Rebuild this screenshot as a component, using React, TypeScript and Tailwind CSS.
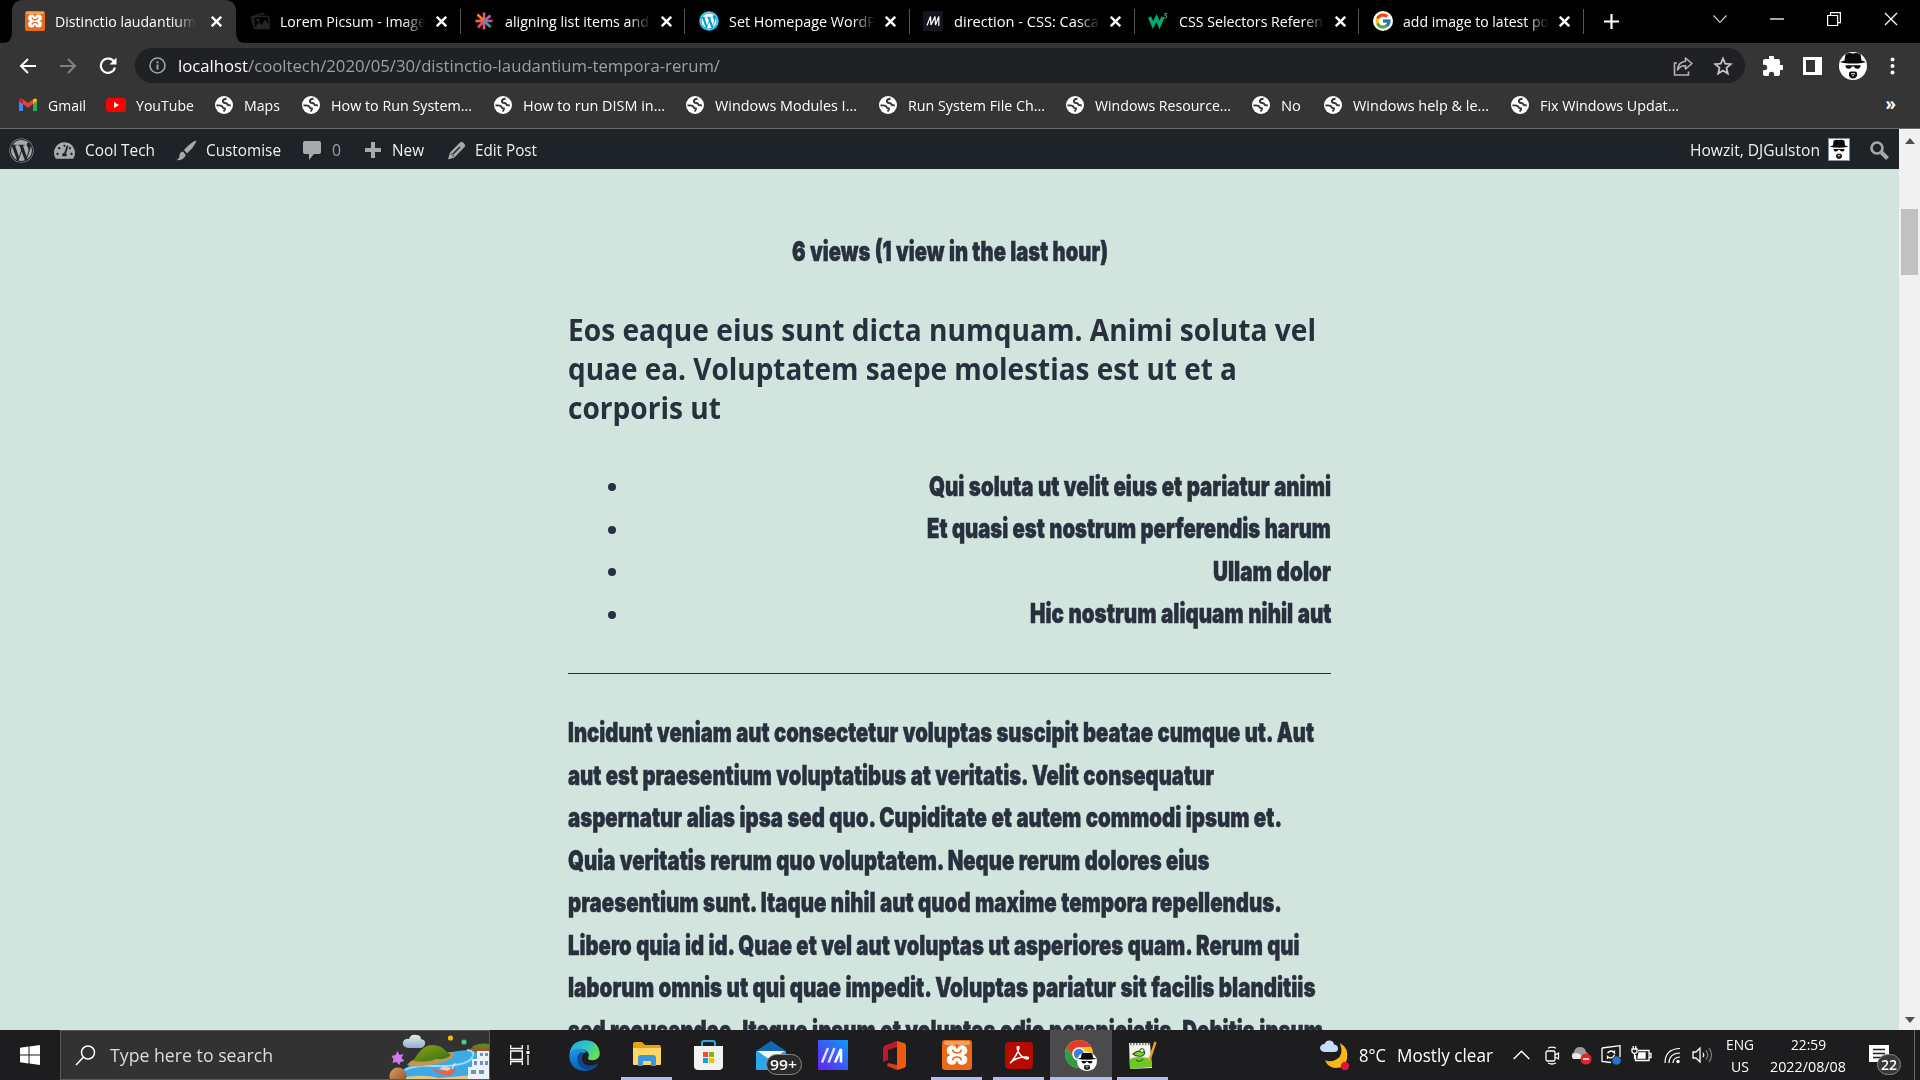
import React, { useLayoutEffect, useRef } from "react";
import { FaWordpress, FaTachometerAlt } from "react-icons/fa";
import { FcGoogle } from "react-icons/fc";

/* Single line of text squeezed or stretched to an exact width. */
function Fit({ w, className = "", children }: { w: number; className?: string; children: React.ReactNode }) {
  const ref = useRef<HTMLSpanElement>(null);
  useLayoutEffect(() => {
    const el = ref.current;
    if (el && el.offsetWidth) {
      el.style.transform = "none";
      el.style.transform = `scaleX(${w / el.getBoundingClientRect().width})`;
    }
  }, [w]);
  return (
    <span className={"block shrink-0 whitespace-nowrap " + className} style={{ width: w }}>
      <span ref={ref} className="inline-block origin-left">{children}</span>
    </span>
  );
}

const Cross = ({ s = 11, t = 2.2 }: { s?: number; t?: number }) => (
  <svg width={s} height={s} viewBox="0 0 10 10" stroke="#fff" strokeWidth={t} fill="none"><path d="M.7.7l8.600 8.600M9.300.7L.7 9.300" /></svg>
);

const Xampp = ({ s }: { s: number }) => (
  <svg width={s} height={s} viewBox="0 0 30 30">
    <rect width="30" height="30" rx="3" fill="#ec6a16" />
    <rect x="2" y="1" width="26" height="4" rx="2" fill="#f5a05c" />
    <g fill="#fff">
      <circle cx="10" cy="10.500" r="5.300" /><circle cx="20" cy="10.500" r="5.300" />
      <circle cx="10" cy="19.500" r="5.300" /><circle cx="20" cy="19.500" r="5.300" />
      <path d="M8 11h14v8H8z" />
    </g>
    <path d="M10.500 9.500q.5 3.500 4.500 3.500t4.500-3.500M10.500 20.500q.5-3.500 4.500-3.500t4.500 3.500" fill="none" stroke="#ec6a16" strokeWidth="1.700" />
    <path d="M4 15h3.500M22.500 15H26M15 4v4.500M15 21.500V26" stroke="#ec6a16" strokeWidth="1.800" />
  </svg>
);

const Picsum = () => (
  <svg width="20" height="20" viewBox="0 0 20 20" fill="none" stroke="#252525" strokeWidth="1.500">
    <path d="M3 14L1.500 6 13 2.500l1 2" /><rect x="4" y="5.500" width="15" height="12" rx="1.500" />
    <path d="M5 17l4-5 3 3 3-5 4 6v1.500z" fill="#252525" /><circle cx="8" cy="9" r="1" />
  </svg>
);

const Splat = () => (
  <svg width="20" height="20" viewBox="0 0 20 20" strokeWidth="2.600">
    <path d="M10 10V1.500" stroke="#e8536c" /><path d="M10 10L3.500 3.500" stroke="#f48024" /><path d="M10 10l6.500-5.500" stroke="#a86bc0" />
    <path d="M10 10H1.500" stroke="#ee6c3b" /><path d="M10 10h8.500" stroke="#d0507a" /><path d="M10 10l-6 6.500" stroke="#e8467c" />
    <path d="M10 10v8.500" stroke="#ed4f6a" /><path d="M10 10l6.500 6" stroke="#2ea8b5" />
  </svg>
);

const WpBlue = () => (
  <span className="flex size-5 items-center justify-center rounded-full bg-[#00a0d2]"><FaWordpress size={18} color="#fff" /></span>
);

const Mdn = () => (
  <svg width="20" height="20" viewBox="0 0 20 20"><rect width="20" height="20" fill="#15141f" /><path d="M4 14.500L7.500 5.500l.5 8.500L12 5.500l.5 8.500L15.800 5.500V15" stroke="#fff" strokeWidth="1.200" fill="none" /></svg>
);

const W3 = () => (
  <svg width="20" height="20" viewBox="0 0 20 20" fill="none" stroke="#04aa6d">
    <path d="M1.500 6l3.500 8 3.500-7 3 7 3.500-8" strokeWidth="3.300" /><path d="M16 2.500h2.500L17 4.500c3 0 1.500 3.500-1 2.300" strokeWidth="1.100" />
  </svg>
);

const GoogleFav = () => <span className="flex size-5 items-center justify-center rounded-full bg-white"><FcGoogle size={18} /></span>;

function Hat({ w, h, round }: { w: number; h: number; round?: boolean }) {
  return (
    <svg width={w} height={h} viewBox="0 0 28 28" preserveAspectRatio="none" className={round ? "rounded-full" : ""}>
      <rect width="28" height="28" fill="#fff" />
      <path d="M5.500 8.500L6.500 2Q10 .4 14 1.400 18 .4 21.500 2l1 6.500q2.500.6 4.500 1.500-5 1.600-13 1.600T1 10q2-1 4.500-1.500z" fill="#0a0a0a" />
      <path d="M6.500 13.200h15v1q-.5 2.600-3.200 2.600-2.600 0-3.300-2.400h-2q-.7 2.400-3.300 2.400-2.700 0-3.200-2.600z" fill="#0a0a0a" />
      <path d="M10 24v-2.500q0-2 2-2h4q2 0 2 2V24q-1.500 2.500-4 2.500T10 24z" fill="#0a0a0a" />
      <path d="M12 21.800h4M13.200 23.800h1.600" stroke="#fff" strokeWidth="1.100" />
    </svg>
  );
}

const tabs: { icon: React.ReactNode; text: string; w: number }[] = [
  { icon: <Picsum />, text: "Lorem Picsum - Image", w: 146 },
  { icon: <Splat />, text: "aligning list items and", w: 144 },
  { icon: <WpBlue />, text: "Set Homepage WordP", w: 147 },
  { icon: <Mdn />, text: "direction - CSS: Casca", w: 145 },
  { icon: <W3 />, text: "CSS Selectors Referen", w: 144 },
  { icon: <GoogleFav />, text: "add image to latest po", w: 146 },
];

function TabStrip() {
  return (
    <div className="flex h-[43px] bg-black pl-[11.6px] text-[15px]">
      <div className="relative flex w-[224.6px] items-center rounded-t-[10px] bg-[#353535] pb-px pl-[13.5px]">
        <svg className="absolute bottom-0 -left-[10px]" width="10" height="10"><path d="M10 0v10H0Q10 10 10 0z" fill="#353535" /></svg>
        <svg className="absolute -right-[10px] bottom-0" width="10" height="10"><path d="M0 0v10h10Q0 10 0 0z" fill="#353535" /></svg>
        <Xampp s={20} />
        <Fit w={141} className="ml-[10px] mask-r-from-85%">Distinctio laudantium</Fit>
        <span className="ml-[15px]"><Cross /></span>
      </div>
      {tabs.map((t) => (
        <div key={t.text} className="flex w-[224.6px] shrink-0 items-center pb-px pl-[13.5px]">
          <span className="w-5 shrink-0">{t.icon}</span>
          <span className="ml-[10.500px] w-[146px] overflow-hidden mask-r-from-85%"><Fit w={t.w}>{t.text}</Fit></span>
          <span className="ml-[10px]"><Cross /></span>
          <span className="mr-0 ml-auto h-[25px] w-px bg-[#555]" />
        </div>
      ))}
      <svg className="mt-[14px] ml-[20px]" width="15" height="15" stroke="#fff" strokeWidth="2.200"><path d="M7.500 0v15M0 7.500h15" /></svg>
      <div className="mr-[22px] ml-auto flex h-[37px] items-center gap-[43px]">
        <svg width="14" height="8" fill="none" stroke="#ddd" strokeWidth="1.100"><path d="M.5.5L7 7.300 13.500.5" /></svg>
        <svg width="14" height="2"><path d="M0 1h14" stroke="#fff" strokeWidth="1.300" /></svg>
        <svg width="14" height="14" fill="none" stroke="#fff" strokeWidth="1.200"><path d="M.6 3.500h10v10H.6zM3.500 3.300V.6h9.900v10h-2.600" /></svg>
        <Cross s={14} t={0.9} />
      </div>
    </div>
  );
}

function Toolbar() {
  return (
    <div className="flex h-[45px] items-center pl-[19px]">
      <svg width="18" height="16" fill="none" stroke="#fff" strokeWidth="2"><path d="M17 8H2M9 1L2 8l7 7" /></svg>
      <svg className="ml-[22px]" width="18" height="16" fill="none" stroke="#808080" strokeWidth="2"><path d="M1 8h15M9 1l7 7-7 7" /></svg>
      <svg className="ml-[22px]" width="18" height="18" fill="none" stroke="#fff" strokeWidth="2.100"><path d="M15.500 5.500A7.200 7.200 0 1016 10.500" /><path d="M17.500.5v7h-7z" fill="#fff" stroke="none" /></svg>
      <div className="ml-[18px] flex h-[35px] w-[1610px] items-center rounded-full bg-[#202124] pr-[12px] pl-[14px] text-[17px]">
        <svg width="17" height="17" fill="none" stroke="#a0a4a8" strokeWidth="1.600"><circle cx="8.500" cy="8.500" r="7.500" /><path d="M8.500 7.500v5M8.500 4.300v2" strokeWidth="2" /></svg>
        <Fit w={542} className="ml-[12px] text-[#9aa0a6]"><span className="text-white">localhost</span>/cooltech/2020/05/30/distinctio-laudantium-tempora-rerum/</Fit>
        <svg className="ml-auto" width="20" height="20" fill="none" stroke="#b4b4b4" strokeWidth="1.600"><path d="M4 7H1.500v12h14v-3.500" /><path d="M12.500 2l6.500 5.500-6.500 5.500V9.800Q7 9.500 4.500 14 5 6 12.500 5.200z" strokeLinejoin="round" /></svg>
        <svg className="ml-[20px]" width="20" height="20" viewBox="0 0 20 20" fill="none" stroke="#c4c4c4" strokeWidth="1.800"><path d="M10 2.500l2.200 5.200 5.600.5-4.300 3.700 1.300 5.600-4.800-3-4.800 3 1.300-5.600-4.300-3.700 5.600-.5z" /></svg>
      </div>
      <svg className="ml-[18px]" width="20" height="20" viewBox="2 2 20 20" fill="#fff"><path d="M20.500 11H19V7a2 2 0 00-2-2h-4V3.500a2.500 2.500 0 00-5 0V5H4a2 2 0 00-2 2v3.800h1.500a2.700 2.700 0 010 5.400H2V20a2 2 0 002 2h3.800v-1.500a2.700 2.700 0 015.400 0V22H17a2 2 0 002-2v-4h1.500a2.500 2.500 0 000-5z" /></svg>
      <svg className="ml-[20px]" width="19" height="18"><path fillRule="evenodd" d="M0 0h19v18H0zM3 3v12h9V3z" fill="#fff" /></svg>
      <span className="ml-[17px]"><Hat w={28} h={28} round /></span>
      <svg className="ml-[23px]" width="5" height="18" fill="#fff"><circle cx="2.500" cy="2.500" r="2" /><circle cx="2.500" cy="9" r="2" /><circle cx="2.500" cy="15.500" r="2" /></svg>
    </div>
  );
}

const Gmail = () => (
  <svg width="20" height="20" viewBox="0 0 20 20"><path d="M1 5v11h4V8" fill="#4285f4" /><path d="M15 8v8h4V5z" fill="#34a853" /><path d="M15 4.500V9l4-3V4.500q-1.500-2-4 0z" fill="#fbbc04" /><path d="M1 4.500q1.500-2 4 0L10 8l5-3.500V9l-5 3.700L5 9 1 6z" fill="#ea4335" /><path d="M1 4.500v2L5 9V4.500Q2.500 2.500 1 4.500z" fill="#c5221f" /></svg>
);
const YouTube = () => (
  <svg width="20" height="20" viewBox="0 0 20 20"><rect y="3" width="20" height="14" rx="3.500" fill="#f00" /><path d="M8 7l5 3-5 3z" fill="#fff" /></svg>
);
const Globe = () => (
  <svg width="20" height="20" viewBox="0 0 20 20">
    <circle cx="10" cy="10" r="9" fill="#fff" />
    <path d="M2.500 10.500q4-.5 5.500.8.8 2 3 2.200.3 1.800-1.500 3M12.500 3.800q-3.300 0-3.700 2.400.3 2 2.700 1.800 2 .3 2.200 2l3 .5" stroke="#353535" strokeWidth="1.900" fill="none" />
  </svg>
);

/* w is the text width, pitch the distance to the next entry. */
const bookmarks = [
  { text: "Gmail", w: 38, pitch: 88, icon: <Gmail /> },
  { text: "YouTube", w: 58, pitch: 108, icon: <YouTube /> },
  { text: "Maps", w: 36, pitch: 87 },
  { text: "How to Run System...", w: 141, pitch: 192 },
  { text: "How to run DISM in...", w: 142, pitch: 192 },
  { text: "Windows Modules I...", w: 142, pitch: 192.500 },
  { text: "Run System File Ch...", w: 137, pitch: 187 },
  { text: "Windows Resource...", w: 136, pitch: 186.500 },
  { text: "No", w: 20, pitch: 72 },
  { text: "Windows help & le...", w: 136, pitch: 187 },
  { text: "Fix Windows Updat...", w: 139, pitch: 187 },
];

function Bookmarks() {
  return (
    <div className="flex h-[39px] items-center pr-[24px] pb-[5px] pl-[18px] text-[15px]">
      {bookmarks.map((b) => (
        <div key={b.text} className="flex shrink-0 items-center gap-[10px]" style={{ width: b.pitch }}>
          <span className="w-5 shrink-0">{b.icon ?? <Globe />}</span>
          <Fit w={b.w}>{b.text}</Fit>
        </div>
      ))}
      <span className="mb-[4px] ml-auto text-[17px] leading-none font-bold">»</span>
    </div>
  );
}

function AdminBar() {
  return (
    <div className="flex h-10 items-center bg-[#1d2327] pt-[2px] pl-[9px] text-[16px] text-[#f0f0f1]">
      <FaWordpress size={25} color="#a7aaad" />
      <FaTachometerAlt size={21} color="#a7aaad" className="ml-[20px]" />
      <Fit w={70} className="ml-[10px]">Cool Tech</Fit>
      <svg className="ml-[21px]" width="21" height="21" viewBox="0 0 21 21" fill="#a7aaad"><path d="M20.500.5Q16 1 8 10l3 3.500Q19 6 20.500.5zM7 11.500Q3.500 12 3.500 15.500 3.500 18.500.5 20q7 1 9.300-5z" /></svg>
      <Fit w={75} className="ml-[9px]">Customise</Fit>
      <svg className="ml-[22px]" width="18" height="21" fill="#a7aaad"><path d="M2 1h14q2 0 2 2v9q0 2-2 2h-5l-5 6v-6H2q-2 0-2-2V3q0-2 2-2z" /></svg>
      <Fit w={9} className="ml-[11px] text-[#9ca0a4]">0</Fit>
      <svg className="ml-[23px]" width="18" height="18"><path d="M9 1v16M1 9h16" stroke="#a7aaad" strokeWidth="4" /></svg>
      <Fit w={32} className="ml-[10px]">New</Fit>
      <svg className="ml-[23px]" width="19" height="19"><path d="M13 1.500q1.500-1.500 3 0l1.500 1.500q1.500 1.500 0 3L7.500 16.500 1 18.500 3 11.500z" fill="#a7aaad" /><path d="M6 13l7-7" stroke="#1d2327" strokeWidth="1.400" /><path d="M4 12.500l3 3" stroke="#1d2327" strokeWidth="1" /></svg>
      <Fit w={62} className="ml-[9px]">Edit Post</Fit>
      <Fit w={130} className="ml-auto">Howzit, DJGulston</Fit>
      <span className="mt-[-2px] ml-[8px] border border-[#8c8f94]"><Hat w={20} h={21} /></span>
      <svg className="mr-[10px] ml-[20px]" width="19" height="19" fill="none" stroke="#a7aaad"><circle cx="7" cy="7" r="5.500" strokeWidth="2.600" /><path d="M11.500 11.500l6 6" strokeWidth="4" /></svg>
    </div>
  );
}

const bullets = [
  { text: "Qui soluta ut velit eius et pariatur animi", w: 402 },
  { text: "Et quasi est nostrum perferendis harum", w: 404 },
  { text: "Ullam dolor", w: 118 },
  { text: "Hic nostrum aliquam nihil aut", w: 301.500 },
];
const lines = [
  { text: "Incidunt veniam aut consectetur voluptas suscipit beatae cumque ut. Aut", w: 746 },
  { text: "aut est praesentium voluptatibus at veritatis. Velit consequatur", w: 646 },
  { text: "aspernatur alias ipsa sed quo. Cupiditate et autem commodi ipsum et.", w: 714 },
  { text: "Quia veritatis rerum quo voluptatem. Neque rerum dolores eius", w: 641.500 },
  { text: "praesentium sunt. Itaque nihil aut quod maxime tempora repellendus.", w: 714 },
  { text: "Libero quia id id. Quae et vel aut voluptas ut asperiores quam. Rerum qui", w: 731.500 },
  { text: "laborum omnis ut qui quae impedit. Voluptas pariatur sit facilis blanditiis", w: 747.500 },
  { text: "sed recusandae. Itaque ipsum et voluptas odio perspiciatis. Debitis ipsum", w: 755 },
];
const heading = [
  { text: "Eos eaque eius sunt dicta numquam. Animi soluta vel", w: 748 },
  { text: "quae ea. Voluptatem saepe molestias est ut et a", w: 669 },
  { text: "corporis ut", w: 153 },
];

function Article() {
  return (
    <main className="min-w-0 flex-1 overflow-hidden bg-[#d1e4dd] pt-[61px] text-[#28303d]">
      <div className="mx-auto w-[763px] font-['Inter'] text-[27.5px] leading-[42.5px] font-black [word-spacing:0.5px] [-webkit-text-stroke:0.5px_#28303d]">
        <div className="flex justify-center"><Fit w={316}>6 views (1 view in the last hour)</Fit></div>
        <h3 className="mt-[37.5px] font-['Open_Sans'] text-[30px] leading-[39px] font-bold [word-spacing:0] [-webkit-text-stroke:0]">
          {heading.map((l) => <Fit key={l.text} w={l.w}>{l.text}</Fit>)}
        </h3>
        <ul className="mt-[37.5px]">
          {bullets.map((b) => (
            <li key={b.text} className="flex items-center justify-between pl-[40px]">
              <span className="mt-[3px] size-[8px] rounded-full bg-[#28303d]" />
              <Fit w={b.w}>{b.text}</Fit>
            </li>
          ))}
        </ul>
        <hr className="mt-[38px] border-t border-[#28303d]" />
        <div className="mt-[37.5px]">
          {lines.map((l) => <Fit key={l.text} w={l.w}>{l.text}</Fit>)}
        </div>
      </div>
    </main>
  );
}

function Scrollbar() {
  return (
    <div className="flex w-[21px] flex-col items-center justify-between bg-[#f1f1f1] pt-[9px] pb-[7px]">
      <div className="flex flex-col items-center">
        <svg width="10" height="6"><path d="M0 6l5-6 5 6z" fill="#505050" /></svg>
        <div className="mt-[65px] h-[66px] w-[17px] bg-[#c1c1c1]" />
      </div>
      <svg width="10" height="6"><path d="M0 0l5 6 5-6z" fill="#505050" /></svg>
    </div>
  );
}

const Scene = () => (
  <svg width="100" height="47" viewBox="0 0 100 47">
    <defs>
      <linearGradient id="hill" x1="0" y1="0" x2="1" y2="1"><stop offset="0" stopColor="#9aa312" /><stop offset=".5" stopColor="#5f8a12" /><stop offset="1" stopColor="#2f6d18" /></linearGradient>
      <linearGradient id="cloud" x1="0" y1="0" x2="0" y2="1"><stop offset="0" stopColor="#e4edf3" /><stop offset="1" stopColor="#8fb0c8" /></linearGradient>
      <linearGradient id="rock" x1="0" y1="0" x2="1" y2="1"><stop offset="0" stopColor="#dba06c" /><stop offset="1" stopColor="#8c4a22" /></linearGradient>
    </defs>
    <path d="M5 47Q14 35 30 29 60 16 100 18V47z" fill="#3fa9e6" />
    <path d="M16 38Q26 33 44 34q30 1 38-7 6-8-4-9" fill="none" stroke="#9adcf5" strokeWidth="2" />
    <path d="M8 47q22-6 42-1l34-3v4z" fill="#e9c583" />
    <path d="M18 33q4-6 16-8l28-5q6 2 1 6-10 6-24 7-12 3-21 0z" fill="#c69555" />
    <path d="M24 29Q34 12 44 13q8 0 13 6l5 4q-5 5-15 4-8 4-23 2z" fill="url(#hill)" />
    <path d="M81 17q6-6 19-4v9q-12 1-19-5z" fill="#9b5a2b" /><path d="M83 15q7-5 17-3v3q-8 2-17 0z" fill="#5d8a1b" />
    <path d="M79 47V35h4v-8h5v-8h12v28z" fill="#eef2f8" />
    <path d="M91 21h3v3h-3zM96 21h3v3h-3zM85 29h3v4h-3zM91 29h3v4h-3zM96 29h3v4h-3zM82 38h5v4h-5zM90 38h5v4h-5z" fill="#6f8fc4" />
    <path d="M43 36l8 3 16-2q-3 7-9 6-10 0-15-7z" fill="#f0603f" /><path d="M50 37l5-3 7 2-3 3z" fill="#fbc8b2" /><path d="M63 37l3-6" stroke="#fff" />
    <circle cx="9" cy="44" r="8.500" fill="url(#rock)" />
    <path d="M19 16q-6-1-5-6 2-4 6-3 2-5 7-4 5 0 5 4 5 1 4 5-1 4-5 4z" fill="url(#cloud)" />
    <path d="M8.500 19l2 4 4-1-2 4 3 3-4 1-1 3-3-3-4 1 1-4-2-3 4-1z" fill="#cf7af0" />
    <circle cx="61.500" cy="6" r="2.600" fill="#ffb400" /><circle cx="75" cy="10" r="2.600" fill="#43d17a" />
  </svg>
);

const Edge = () => (
  <svg width="31" height="31" viewBox="0 0 31 31">
    <defs>
      <linearGradient id="e1" x1="0" y1="0" x2="1" y2=".5"><stop offset="0" stopColor="#1fa6e8" /><stop offset=".6" stopColor="#34c7c0" /><stop offset="1" stopColor="#62e05a" /></linearGradient>
      <linearGradient id="e2" x1="0" y1="0" x2="0" y2="1"><stop offset="0" stopColor="#1b9de2" /><stop offset="1" stopColor="#0b5cb8" /></linearGradient>
    </defs>
    <path d="M.5 14Q2 1 15.500.2 29 0 30.800 13q.2 7-7.500 7.200-5.500 0-4-3 1.500-3.200-1.300-6Q12 6 .5 14z" fill="url(#e1)" />
    <path d="M.3 16Q1 8.500 9 8.500q6 .3 8.500 3.500-5 1-5 7 1 8 10 7 3-.3 6.500-2.500-4 7.500-13.500 7.500Q1 30 .3 16z" fill="url(#e2)" />
    <path d="M10.500 13q-4 5-1 11 3.500 5 9 6.500Q26 29 29 23.500 17 29 13 21.500q-1.500-5 2-9-3-.8-4.500.5z" fill="#0a4a94" />
  </svg>
);
const Folder = () => (
  <svg width="28" height="26" viewBox="0 0 28 26"><path d="M0 2q0-2 2-2h7l3 3h14q2 0 2 2v6H0z" fill="#e5a112" /><path d="M0 6h28v16q0 1-1 1H1q-1 0-1-1z" fill="#ffd563" /><path d="M5 24v-8q0-3 3-3h12q3 0 3 3v8h-5v-5h-8v5z" fill="#3c97dc" /></svg>
);
const Store = () => (
  <svg width="29" height="31" viewBox="0 0 29 31"><path d="M8 8V3q0-2 2-2h9q2 0 2 2v5" fill="none" stroke="#27a9e6" strokeWidth="2" /><path d="M0 6h29v20q0 4-4 4H4q-4 0-4-4z" fill="#f2f2f2" /><path fill="#f25022" d="M9 12h5v5H9z" /><path fill="#7fba00" d="M15 12h5v5h-5z" /><path fill="#00a4ef" d="M9 18h5v5H9z" /><path fill="#ffb900" d="M15 18h5v5h-5z" /></svg>
);
const Mail = () => (
  <svg width="30" height="29" viewBox="0 0 30 29"><path d="M0 10L15 0l15 10v17H0z" fill="#1168b5" /><path d="M0 10l15 9.500L30 10v18q0 1-1 1H1q-1 0-1-1z" fill="#2ca6ea" /><path d="M1 10h28l-14 9.500z" fill="#f4f6f8" /></svg>
);
const MyAsus = () => (
  <svg width="30" height="30" viewBox="0 0 30 30"><defs><linearGradient id="ma" x1="0" y1="1" x2="1" y2="0"><stop offset="0" stopColor="#6a1ff0" /><stop offset=".5" stopColor="#3a5cf5" /><stop offset="1" stopColor="#0a9cf8" /></linearGradient></defs><rect width="30" height="30" fill="url(#ma)" /><path d="M4 22.500L10 8M10.500 22.500l6-14.500" stroke="#dfe4ff" strokeWidth="2.400" /><path d="M17 22.500L23 9v13.500" stroke="#fff" strokeWidth="2.600" fill="none" /></svg>
);
const Office = () => (
  <svg width="23" height="29" viewBox="0 0 23 29"><path d="M14 0L3 4Q0 5 0 8v13l5-2V9l9-3z" fill="#b9192b" /><path d="M14 0l7 2q2 .6 2 3v19q0 2.300-2 3l-7 2z" fill="#ee5a13" /><path d="M5 22l9 2v5L4 25z" fill="#d63a1c" /></svg>
);
const Acrobat = () => (
  <svg width="28" height="27" viewBox="0 0 28 27"><rect width="28" height="27" rx="4" fill="#b30b00" /><path d="M6 20.500c2-3.500 7-8 8-14.500.3-2-2-2-1.800 0C12.700 11 17 16 22 17c2 0 2-2 0-2-5-.5-11 1.500-14.500 4-2 1.300-2.800 2.500-1.500 1.500z" fill="none" stroke="#fff" strokeWidth="1.500" /></svg>
);
const Chrome = () => (
  <span className="relative block h-[31px] w-[31px]">
    <svg width="28" height="28" viewBox="0 0 28 28"><circle cx="14" cy="14" r="14" fill="#fbc116" /><path d="M1.900 7A14 14 0 0126.100 7H14a7 7 0 00-6 10.500z" fill="#e33b2e" /><path d="M1.900 7A14 14 0 0014 28l6-10.500a7 7 0 01-12 0z" fill="#2b9e4b" /><circle cx="14" cy="14" r="6.500" fill="#fff" /><circle cx="14" cy="14" r="5.200" fill="#3b7ded" /></svg>
    <span className="absolute top-[12px] left-[12px]"><Hat w={20} h={19} round /></span>
  </span>
);
const Npp = () => (
  <svg width="29" height="29" viewBox="0 0 29 29"><path d="M1 2h21l2 25-22 1z" fill="#f4f4ee" /><path d="M1.500 18q10-4 21.500 0l1 8-22 2z" fill="#6cc827" /><path d="M2 3h20" stroke="#777" strokeDasharray="1.500 1.500" strokeWidth="2.500" /><path d="M5 13q4-4 11-3 2 3-2 5-6 1-9-2zM8 19q4 3 7-1" fill="#7ed33a" stroke="#2c5d16" strokeWidth="1.200" /><circle cx="14" cy="9.500" r="2" fill="#e8f6dd" stroke="#2c5d16" /><path d="M27.500 1L21 20" stroke="#e8a225" strokeWidth="2.400" /></svg>
);

const apps: { name: string; icon: React.ReactNode; open?: boolean; active?: boolean; badge?: string }[] = [
  { name: "edge", icon: <Edge /> },
  { name: "explorer", icon: <Folder />, open: true },
  { name: "store", icon: <Store /> },
  { name: "mail", icon: <Mail />, badge: "99+" },
  { name: "asus", icon: <MyAsus /> },
  { name: "office", icon: <Office /> },
  { name: "xampp", icon: <Xampp s={30} />, open: true },
  { name: "acrobat", icon: <Acrobat />, open: true },
  { name: "chrome", icon: <Chrome />, active: true },
  { name: "npp", icon: <Npp />, open: true },
];

function Taskbar() {
  return (
    <footer className="flex h-[50px] items-center bg-[#1d1d1f] text-white">
      <svg className="ml-[20px]" width="20" height="20" fill="#fff"><path d="M0 2.800L8.500 1.600v8H0zM9.500 1.400L20 0v9.600H9.500zM0 10.400h8.500v8L0 17.200zM9.500 10.400H20V20L9.500 18.600z" /></svg>
      <div className="ml-[20px] flex h-full w-[430px] items-center border border-[#5a5a5c] bg-[#323232] pl-[14px]">
        <svg width="21" height="21" fill="none" stroke="#fff" strokeWidth="1.500"><circle cx="13" cy="7.500" r="6.500" /><path d="M8.500 12L1 20" /></svg>
        <Fit w={163} className="ml-[14px] text-[18.500px] text-[#dcdcdc]">Type here to search</Fit>
        <span className="ml-auto self-end"><Scene /></span>
      </div>
      <svg className="ml-[20px]" width="21" height="20" fill="none" stroke="#fff" strokeWidth="1.300"><path d="M.7 0v3.500h11.600V0M.7 6h11.600v8.500H.7zM.7 20v-3.500h11.600V20M18 0v5M18 10v10" /><path d="M16.500 6h3v3h-3z" fill="#fff" stroke="none" /></svg>
      <div className="ml-[22.5px] flex h-full">
        {apps.map((a) => (
          <div key={a.name} className={"relative flex w-[62px] items-center justify-center " + (a.active ? "bg-[#4b4b4d]" : "")}>
            {a.icon}
            {a.badge && <span className="absolute top-[24px] left-[26px] flex h-[21px] w-[36px] items-center justify-center rounded-full border border-[#8a8a8a] bg-[#2b2b2d] text-[14.5px] font-semibold"><Fit w={27}>{a.badge}</Fit></span>}
            {(a.open || a.active) && <span className={"absolute bottom-0 h-[3px] bg-[#b4bcf7] " + (a.active ? "w-[62px]" : "w-[51px]")} />}
          </div>
        ))}
      </div>
      <svg className="ml-auto" width="30" height="30" viewBox="0 0 30 30"><path d="M20 3q4 12-3 16-6 4-12 1 3 8 11 8 9 0 11-9Q29 8 20 3z" fill="#fbb516" /><path d="M4 12q-4-1-4-4.500Q1 4 4.500 4 6 0 10 .500q3.500 .5 4 4 4 .5 4 4t-4 3.500z" fill="#c9dcf5" /><circle cx="25" cy="26" r="4.200" fill="#e3123c" /></svg>
      <Fit w={27} className="ml-[9px] text-[18px]">8°C</Fit>
      <Fit w={96} className="ml-[11px] text-[18px]">Mostly clear</Fit>
      <svg className="ml-[20px]" width="17" height="10" fill="none" stroke="#fff" strokeWidth="1.500"><path d="M.7 9L8.500 1.200 16.300 9" /></svg>
      <svg className="ml-[15px]" width="16" height="19" fill="none" stroke="#fff" strokeWidth="1.300"><rect x="1" y="5" width="9" height="10" rx="1.500" /><path d="M10 9l3.500-2v6L10 11M3 2.200Q7 0 11 2.200M3 17Q7 19 11 17" /></svg>
      <svg className="ml-[10px]" width="21" height="19"><path d="M2 12q-3-4 1-6 1-5 6-5 5 0 6 5 3 1 3 6z" fill="#9b9b9b" /><path d="M2 13q-3-4 2-6 5-1 9 6z" fill="#e8e8e8" /><circle cx="15" cy="13" r="5.500" fill="#e0262c" /><path d="M12 13h6" stroke="#fff" strokeWidth="1.500" /></svg>
      <svg className="ml-[9px]" width="21" height="20" fill="none" stroke="#fff" strokeWidth="1.300"><path d="M1 3l18-2.300V12M10 17.500L1 16.500V3" /><path d="M6.500 8q4-4 7 0V5.500M13.500 10q-3 5-7 1.500V14" /><circle cx="15.500" cy="15.500" r="4.300" fill="#2674c8" stroke="none" /></svg>
      <svg className="ml-[9px]" width="21" height="18" fill="none" stroke="#fff" strokeWidth="1.300"><path d="M7 4.500h11v10H4.500V9M18.500 7.500H20v4h-1.500" /><path d="M8 7h6v5H7z" fill="#fff" /><path d="M1 3h5v3q-2.500 3-5 0zM2.200 0v3M4.800 0v3M3.500 8v5" /></svg>
      <svg className="ml-[12px]" width="17" height="17" fill="none" stroke="#fff" strokeWidth="1.200"><path d="M1 16Q1 2 16 1.500M5 16Q5 6.500 16 6M9 16q0-5.500 7-6" /><circle cx="14" cy="14.500" r="1.700" fill="#fff" stroke="none" /></svg>
      <svg className="ml-[11px]" width="21" height="18" fill="none" stroke="#fff" strokeWidth="1.300"><path d="M1 6h3l4-4v14l-4-4H1z" /><path d="M11 7q1.500 2 0 4" /><path d="M14 4.500q3.500 4.500 0 9M17 2q5 7 0 14" stroke="#777" /></svg>
      <div className="ml-[12px] flex w-[29px] flex-col items-center text-[15px] leading-[22.5px]"><Fit w={28}>ENG</Fit><Fit w={18}>US</Fit></div>
      <div className="ml-[15px] flex w-[78px] flex-col items-center text-[15px] leading-[22.5px]"><Fit w={35}>22:59</Fit><Fit w={76}>2022/08/08</Fit></div>
      <div className="relative ml-[22px] h-[20px] w-[32px]">
        <svg width="20" height="20"><path d="M0 0h20v17h-5l-3 3v-3H0z" fill="#fff" /><path d="M4 4.500h12M4 8.500h12M4 12.500h8" stroke="#1d1d1f" strokeWidth="1.500" /></svg>
        <span className="absolute top-[9px] left-[8px] flex h-[21px] w-[24px] items-center justify-center rounded-full border border-[#8a8a8a] bg-[#3a3a3c] text-[14px] font-semibold"><Fit w={16}>22</Fit></span>
      </div>
      <span className="mr-[5px] ml-[13px] h-full w-px bg-[#6a6a6a]" />
    </footer>
  );
}

export default function App() {
  return (
    <div className="flex h-[1080px] w-[1920px] flex-col overflow-hidden bg-black font-['Open_Sans','Noto_Sans',sans-serif] text-white">
      <TabStrip />
      <div className="h-[86px] border-b border-[#6b6b6b] bg-[#353535]">
        <Toolbar />
        <Bookmarks />
      </div>
      <div className="flex min-h-0 flex-1">
        <div className="flex min-w-0 flex-1 flex-col">
          <AdminBar />
          <Article />
        </div>
        <Scrollbar />
      </div>
      <Taskbar />
    </div>
  );
}
